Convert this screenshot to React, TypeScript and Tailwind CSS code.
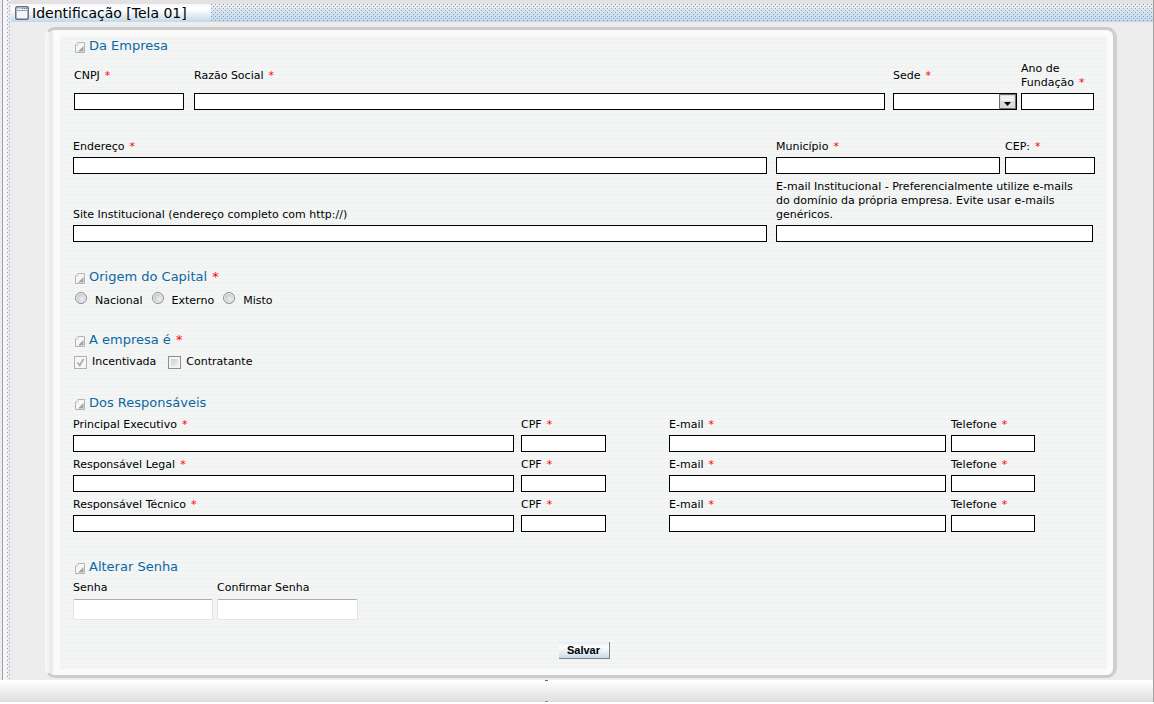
import { useId, type ReactNode } from "react";

const Star = () => <span className="ml-[5px] text-[#ff0000]">*</span>;

function Heading({ children, required }: { children: ReactNode; required?: boolean }) {
  return (
    <h2 className="flex items-center gap-1 pl-0.5 text-[13px] leading-[18px] text-[#0b68a2]">
      <svg width="10" height="11" viewBox="0 0 10 11" className="mt-0.5 shrink-0" aria-hidden="true">
        <path d="M3 .5h6.500v10H.5V3z" fill="#f6f6f6" stroke="#b4b4b4" />
        <path d="M.5 3H3V.5" fill="#fff" stroke="#c8c8c8" />
        <path d="M8.500 4v5.500H3z" fill="#a4a4a4" />
      </svg>
      <span>
        {children}
        {required && <Star />}
      </span>
    </h2>
  );
}

function Field({
  label,
  required,
  className,
  tall,
}: {
  label: string;
  required?: boolean;
  className: string;
  tall?: boolean;
}) {
  const id = useId();
  return (
    <div className={`flex flex-col gap-[3px] ${className}`}>
      <label htmlFor={id} className={tall ? "flex h-7 items-center" : "pr-1.5"}>
        <span>
          {label}
          {required && <Star />}
        </span>
      </label>
      <input id={id} type="text" className="h-[17px] w-full border border-black bg-white px-1" />
    </div>
  );
}

function PasswordField({ label, className }: { label: string; className: string }) {
  const id = useId();
  return (
    <div className={`flex flex-col gap-1 ${className}`}>
      <label htmlFor={id}>{label}</label>
      <input
        id={id}
        type="password"
        className="h-[21px] w-full rounded-[2px] border border-[#e2e3ea] border-t-[#abadb3] bg-white px-1"
      />
    </div>
  );
}

function Person({ role }: { role: string }) {
  return (
    <div className="flex">
      <Field label={role} required className="mr-[7px] min-w-0 flex-[441]" />
      <Field label="CPF" required className="mr-[63px] min-w-0 flex-[85]" />
      <Field label="E-mail" required className="mr-[5px] min-w-0 flex-[277]" />
      <Field label="Telefone" required className="mr-[60px] min-w-0 flex-[84]" />
    </div>
  );
}

function Radio({ label }: { label: string }) {
  return (
    <label className="flex items-center gap-2">
      <input
        type="radio"
        name="capital"
        className="-mt-1.5 size-3 appearance-none rounded-full border border-[#8e8f8f] bg-[radial-gradient(circle_at_60%_60%,#f0f0f0,#c6cacd_60%,#f0f0f0_80%)] shadow-[inset_0_0_0_1px_#f4f4f4]"
      />
      {label}
    </label>
  );
}

export default function App() {
  return (
    <div className="flex flex-col border-r border-[#a0a0a0] bg-[#ededed] font-['Verdana','DejaVu_Sans',sans-serif] text-[11px] leading-[14px] text-black">
      <div className="flex">
        <div className="flex w-[11px] shrink-0 bg-[#ececf0]">
          <div className="ml-0.5 w-px bg-[#a0a0a0]" />
          <div className="w-1 bg-[#f4f4f8]" />
          <div className="w-[3px] bg-[conic-gradient(from_270deg_at_1px_1px,#9c9cb0_90deg,transparent_0),conic-gradient(from_270deg_at_1px_1px,#9c9cb0_90deg,transparent_0)] bg-[length:4px_4px] bg-[position:0_0,2px_2px]" />
        </div>
        <div className="flex min-w-0 flex-1 flex-col">
          <div className="h-1 bg-[#e3e1e1]" />
          <header className="flex h-[18px] bg-gradient-to-b from-[#f4f8fb] via-white via-30% to-[#c3d7e9]">
            <h1 className="flex w-[200px] items-center gap-[3px] pl-1 text-[14px] leading-[18px]">
              <svg width="14" height="14" viewBox="0 0 14 14" className="shrink-0" aria-hidden="true">
                <rect x=".75" y=".75" width="12.500" height="12.500" rx="1.500" fill="#f4f6f8" stroke="#647083" strokeWidth="1.500" />
                <path d="M2 2.500h10" stroke="#c3ccd8" />
                <path d="M2 4.500h10" stroke="#8f9caf" />
                <path d="M7 2.500h1m1 0h1m1 0h1" stroke="#647083" />
              </svg>
              <span className="whitespace-nowrap">Identificação [Tela 01]</span>
            </h1>
            <div className="flex-1 bg-[conic-gradient(from_270deg_at_1px_1px,#7f9dbd_90deg,transparent_0),conic-gradient(from_270deg_at_1px_1px,#7f9dbd_90deg,transparent_0),linear-gradient(#eceef0,#c3d7e9)] bg-[length:4px_4px,4px_4px,100%_100%] bg-[position:0_0,2px_2px,0_0]" />
          </header>

          <main className="pt-[5px] pr-9 pb-0.5 pl-[34px]">
            <form
              onSubmit={(e) => e.preventDefault()}
              className="rounded-[10px] border-t-[3px] border-r-[4px] border-b-[3px] border-l-2 border-t-[#cbcbcb] border-r-[#cfcfcf] border-b-[#cbcbcb] border-l-[#f6f6f6] bg-[linear-gradient(to_right,#f2f2f2_2px,#e6e6e6_4px,#fbfbfb_7px)] pt-1.5 pr-1.5 pb-1.5 pl-[13px]"
            >
              <div className="bg-[#f2f4f3] bg-[repeating-linear-gradient(#f4f5f5_0_2px,#f0f3f2_2px_4px)] pt-px pr-3 pb-2.5 pl-[13px]">
                <Heading>Da Empresa</Heading>
                <div className="mt-[7px] flex">
                  <Field tall label="CNPJ" required className="mr-2.5 ml-px min-w-0 flex-[110]" />
                  <Field tall label="Razão Social" required className="mr-2 min-w-0 flex-[691]" />
                  <div className="mr-1 flex min-w-0 flex-[124] flex-col gap-[3px]">
                    <label htmlFor="sede" className="flex h-7 items-center">
                      <span>
                        Sede
                        <Star />
                      </span>
                    </label>
                    <div className="relative h-[17px]">
                      <select id="sede" className="block h-[17px] w-full appearance-none border border-black bg-white" />
                      <svg
                        width="17"
                        height="15"
                        viewBox="0 0 17 15"
                        className="pointer-events-none absolute top-px right-px"
                        aria-hidden="true"
                      >
                        <rect x=".5" y=".5" width="16" height="14" fill="#dcdcdc" stroke="#707070" />
                        <path d="M2 2h13v5H2z" fill="#f2f2f2" />
                        <path d="M5 8h7l-3.500 4z" fill="#000" />
                      </svg>
                    </div>
                  </div>
                  <Field tall label="Ano de Fundação" required className="mr-px min-w-0 flex-[73]" />
                </div>

                <div className="mt-[30px] flex">
                  <Field label="Endereço" required className="mr-[9px] min-w-0 flex-[694]" />
                  <Field label="Município" required className="mr-[5px] min-w-0 flex-[224]" />
                  <Field label="CEP:" required className="min-w-0 flex-[90]" />
                </div>

                <div className="mt-1.5 flex items-end">
                  <Field
                    label="Site Institucional (endereço completo com http://)"
                    className="mr-[9px] min-w-0 flex-[694]"
                  />
                  <Field
                    label="E-mail Institucional - Preferencialmente utilize e-mails do domínio da própria empresa. Evite usar e-mails genéricos."
                    className="mr-0.5 min-w-0 flex-[317]"
                  />
                </div>

                <div className="mt-[26px]">
                  <Heading required>Origem do Capital</Heading>
                </div>
                <div className="mt-2 flex gap-[9px] pl-0.5">
                  <Radio label="Nacional" />
                  <Radio label="Externo" />
                  <Radio label="Misto" />
                </div>

                <div className="mt-[23px]">
                  <Heading required>A empresa é</Heading>
                </div>
                <div className="mt-1.5 flex gap-3 pl-px">
                  <label className="flex items-center gap-[5px]">
                    <span className="relative flex">
                      <input
                        type="checkbox"
                        checked
                        disabled
                        readOnly
                        className="size-[13px] appearance-none border border-[#b1b1b1] bg-[#f6f6f6]"
                      />
                      <svg width="13" height="13" viewBox="0 0 13 13" className="absolute inset-0" aria-hidden="true">
                        <path d="M3.500 6.500l2.200 3 3.800-6.500" fill="none" stroke="#a8a8a8" strokeWidth="1.600" />
                      </svg>
                    </span>
                    Incentivada
                  </label>
                  <label className="flex items-center gap-[5px]">
                    <input
                      type="checkbox"
                      className="size-[13px] appearance-none border border-[#8e8f8f] bg-gradient-to-br from-[#c6cad0] to-[#f6f6f6] shadow-[inset_0_0_0_2px_#f4f4f4]"
                    />
                    Contratante
                  </label>
                </div>

                <div className="mt-[25px]">
                  <Heading>Dos Responsáveis</Heading>
                </div>
                <div className="mt-1.5 flex flex-col gap-1.5">
                  <Person role="Principal Executivo" />
                  <Person role="Responsável Legal" />
                  <Person role="Responsável Técnico" />
                </div>

                <div className="mt-[26px]">
                  <Heading>Alterar Senha</Heading>
                </div>
                <div className="mt-[5px] flex gap-1">
                  <PasswordField label="Senha" className="w-[140px]" />
                  <PasswordField label="Confirmar Senha" className="w-[141px]" />
                </div>

                <div className="mt-[22px] flex justify-center">
                  <button
                    type="submit"
                    className="h-[17px] w-[51px] border-r border-b border-[#7b7f86] bg-gradient-to-b from-[#e2ebf3] via-white via-30% to-[#c8dae9] font-['Liberation_Sans',sans-serif] text-[11px] leading-[14px] font-bold"
                  >
                    Salvar
                  </button>
                </div>
              </div>
            </form>
          </main>
        </div>
      </div>
      <footer className="flex h-[22px] flex-col items-center justify-between bg-gradient-to-b from-white to-[#dedede] pr-[60px]">
        <span className="h-px w-[3px] bg-[#666]" />
        <span className="h-px w-[3px] bg-[#888]" />
      </footer>
    </div>
  );
}
